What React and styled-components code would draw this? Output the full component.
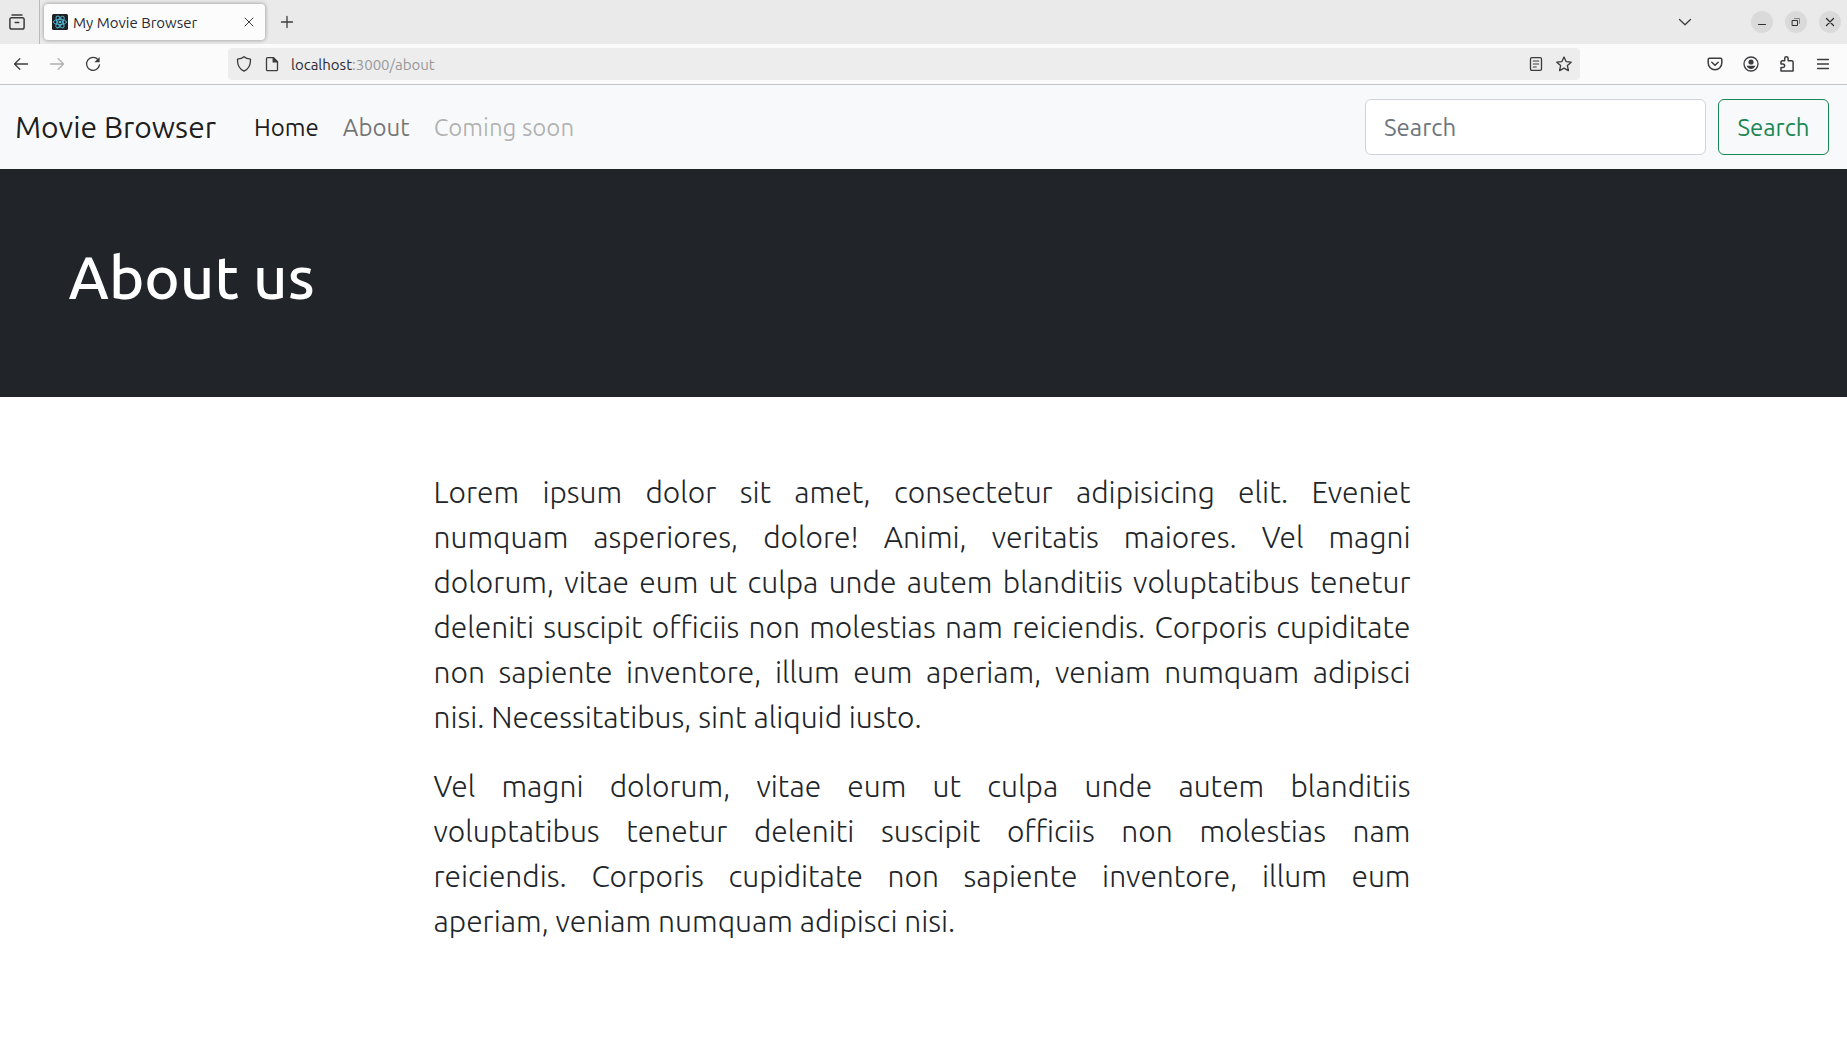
import React from "react";
import styled, { createGlobalStyle } from "styled-components";

const GlobalStyle = createGlobalStyle`
  *, *::before, *::after { box-sizing: border-box; }
  body {
    margin: 0;
    background: #fff;
    color: #212529;
    font-family: Ubuntu, "Noto Sans", "Open Sans", sans-serif;
    font-size: 24px;
    font-weight: 400;
    line-height: 36px;
  }
  button, input { font: inherit; margin: 0; }
`;

/* Browser window */
const Chrome = styled.header`
  color: #2b2a33;
  font-size: 15px;
  line-height: 20px;
  border-bottom: 1px solid #c4c4c4;
`;

const TabStrip = styled.div`
  display: flex;
  align-items: center;
  height: 44px;
  padding-right: 6px;
  background: #eaeaea;
`;

const IconButton = styled.button`
  display: flex;
  align-items: center;
  justify-content: center;
  flex: none;
  width: ${(p) => p.$width || 36}px;
  height: 32px;
  padding: 0;
  border: 0;
  background: transparent;
  color: ${(p) => (p.$faded ? "#b0b0b0" : "#3c3c3f")};
`;

const ViewSlot = styled.div`
  display: flex;
  align-items: center;
  justify-content: center;
  align-self: stretch;
  width: 40px;
  padding-right: 5px;
  border-right: 1px solid #bababa;
`;

const Tab = styled.div`
  display: flex;
  align-items: center;
  width: 221px;
  height: 36px;
  margin: 0 4px;
  padding: 0 4px 0 8px;
  border-radius: 4px;
  background: #fcfcfc;
  box-shadow: 0 0 4px rgba(0, 0, 0, 0.4);
`;

const ChromeText = styled.span`
  flex: 1;
  padding: 2px 0 0 5px;
  color: ${(p) => (p.$faded ? "#98989b" : "#2b2a33")};
  white-space: nowrap;
`;

const WindowControls = styled.div`
  display: flex;
  gap: 12px;
  margin-left: 48px;
`;

const RoundButton = styled.button`
  display: flex;
  align-items: center;
  justify-content: center;
  width: 22px;
  height: 22px;
  padding: 0;
  border: 0;
  border-radius: 50%;
  background: #dadada;
  color: #2e2e2e;
`;

const Spacer = styled.div`
  flex: 1;
`;

const Toolbar = styled.div`
  display: flex;
  align-items: center;
  height: 40px;
  padding: 0 6px 0 3px;
  background: #fbfbfb;
`;

const AddressBar = styled.div`
  display: flex;
  align-items: center;
  flex: 1;
  height: 32px;
  margin: 0 117px;
  padding: 0 2px;
  border-radius: 4px;
  background: #ededed;
`;

const Host = styled.span`
  color: #2b2a33;
`;

/* Site */
const Navbar = styled.nav`
  display: flex;
  align-items: center;
  height: 84px;
  padding: 0 18px 0 15px;
  background: #f8f9fa;
`;

const Brand = styled.a`
  margin-right: 26px;
  color: rgba(0, 0, 0, 0.9);
  font-size: 30px;
  line-height: 45px;
  text-decoration: none;
`;

const NavList = styled.ul`
  display: flex;
  flex: 1;
  margin: 0;
  padding: 0;
  list-style: none;
`;

const linkColors = {
  active: "rgba(0, 0, 0, 0.9)",
  normal: "rgba(0, 0, 0, 0.55)",
  disabled: "rgba(0, 0, 0, 0.3)",
};

const NavLink = styled.a`
  display: block;
  padding: 13px 12px 11px;
  color: ${(p) => linkColors[p.$state]};
  text-decoration: none;
`;

const SearchForm = styled.form`
  display: flex;
  gap: 12px;
`;

const SearchInput = styled.input`
  width: 341px;
  height: 56px;
  padding: 9px 18px;
  border: 1px solid #ced4da;
  border-radius: 6px;
  background: #fff;
  color: #212529;
  &::placeholder { color: #6c757d; opacity: 1; }
`;

const SearchButton = styled.button`
  min-width: 111px;
  height: 56px;
  padding: 10px 18px 8px;
  border: 1px solid #198754;
  border-radius: 6px;
  background: transparent;
  color: #198754;
`;

const Container = styled.div`
  max-width: 1710px;
  margin: 0 auto;
`;

const Banner = styled.section`
  padding: 72px 0 84px;
  background: #212529;
  color: #fff;
`;

const Title = styled.h1`
  margin: 0;
  font-size: 60px;
  font-weight: 500;
  line-height: 72px;
`;

const Article = styled.main`
  max-width: 980px;
  margin: 0 auto;
  padding: 73px 3px 72px 0;
`;

const Lead = styled.p`
  margin: 0 0 24px;
  font-size: 30px;
  font-weight: 300;
  line-height: 45px;
  text-align: justify;
`;

const Line = styled.span`
  display: block;
  &:not(:last-child) { text-align-last: justify; }
`;

const Glyph = styled.svg.attrs({ viewBox: "0 0 16 16", "aria-hidden": true })`
  display: block;
  width: 16px;
  height: 16px;
  fill: none;
  stroke: currentColor;
  stroke-width: ${(p) => p.$stroke || 1.3};
  stroke-linecap: round;
  stroke-linejoin: round;
`;

const ReactMark = () => (
  <Glyph>
    <rect width="16" height="16" rx="1.5" fill="#1f2023" stroke="none" />
    <g stroke="#4fb9d6" strokeWidth="0.9">
      <ellipse cx="8" cy="8" rx="6.6" ry="2.6" />
      <ellipse cx="8" cy="8" rx="6.6" ry="2.6" transform="rotate(60 8 8)" />
      <ellipse cx="8" cy="8" rx="6.6" ry="2.6" transform="rotate(120 8 8)" />
    </g>
    <circle cx="8" cy="8" r="1.3" fill="#4fb9d6" stroke="none" />
  </Glyph>
);

function BrowserChrome() {
  return (
    <Chrome>
      <TabStrip>
        <ViewSlot>
          <IconButton $width={32} aria-label="Firefox View">
            <Glyph $stroke={1.5}>
              <path d="M3 1h10M2.400 3.800h11.200a1.500 1.500 0 0 1 1.500 1.500v8a1.800 1.800 0 0 1-1.800 1.800H2.700a1.800 1.800 0 0 1-1.800-1.800v-8a1.500 1.500 0 0 1 1.500-1.500zM6.200 8.500h3.600" />
            </Glyph>
          </IconButton>
        </ViewSlot>
        <Tab>
          <ReactMark />
          <ChromeText>My Movie Browser</ChromeText>
          <IconButton $width={24} aria-label="Close tab">
            <Glyph $stroke={1}><path d="M4 4l8 8M12 4l-8 8" /></Glyph>
          </IconButton>
        </Tab>
        <IconButton aria-label="New tab">
          <Glyph><path d="M8 2.500v11M2.500 8h11" /></Glyph>
        </IconButton>
        <Spacer />
        <IconButton aria-label="List all tabs">
          <Glyph><path d="M2.500 5.500L8 10.800l5.500-5.300" /></Glyph>
        </IconButton>
        <WindowControls>
          <RoundButton aria-label="Minimize">
            <Glyph $stroke={1}><path d="M4.500 10.500h7" /></Glyph>
          </RoundButton>
          <RoundButton aria-label="Restore">
            <Glyph $stroke={1}>
              <path d="M4.500 6.500h5v5h-5z" strokeLinejoin="miter" />
              <path d="M6.500 4.500h5v5" stroke="#858585" strokeLinejoin="miter" />
            </Glyph>
          </RoundButton>
          <RoundButton aria-label="Close">
            <Glyph><path d="M4.500 4.500l7 7M11.500 4.500l-7 7" /></Glyph>
          </RoundButton>
        </WindowControls>
      </TabStrip>
      <Toolbar>
        <IconButton aria-label="Back">
          <Glyph><path d="M14.500 8H1.500M6.800 2.700L1.500 8l5.300 5.300" /></Glyph>
        </IconButton>
        <IconButton aria-label="Forward" $faded disabled>
          <Glyph><path d="M1.500 8h13M9.200 2.700L14.500 8l-5.300 5.300" /></Glyph>
        </IconButton>
        <IconButton aria-label="Reload">
          <Glyph>
            <path d="M13 3.600A6.500 6.500 0 1 0 14.500 8.800" />
            <path d="M14.600 1v5.200H9.400z" fill="currentColor" stroke="none" />
          </Glyph>
        </IconButton>
        <AddressBar>
          <IconButton $width={28} aria-label="Tracking protection">
            <Glyph><path d="M8 .8C9.600 2.300 12 3 14.500 3.200c.2 5.400-1.700 9.700-6.500 12C3.200 12.900 1.300 8.600 1.500 3.200 4 3 6.400 2.300 8 .8z" /></Glyph>
          </IconButton>
          <IconButton $width={28} aria-label="Site information">
            <Glyph>
              <path d="M3.700 1.600h5.800l4 4v7.800a1.200 1.200 0 0 1-1.200 1.200H3.700a1.200 1.200 0 0 1-1.200-1.200V2.800a1.200 1.200 0 0 1 1.200-1.200z" />
              <path d="M9.200 1.600v4.300h4.300z" fill="currentColor" />
            </Glyph>
          </IconButton>
          <ChromeText $faded><Host>localhost</Host>:3000/about</ChromeText>
          <IconButton $width={28} aria-label="Reader view">
            <Glyph>
              <rect x="2.500" y="1.600" width="11" height="12.800" rx="1.400" />
              <path d="M5.300 5h5.400M5.300 8h5.400M5.300 11h3" strokeWidth="1.100" />
            </Glyph>
          </IconButton>
          <IconButton $width={28} aria-label="Bookmark this page">
            <Glyph><path d="M8 1l2.100 4.600 5.100.6-3.800 3.400 1 5L8 12.100l-4.400 2.500 1-5L.8 6.200l5.100-.6z" /></Glyph>
          </IconButton>
        </AddressBar>
        <IconButton aria-label="Save to Pocket">
          <Glyph $stroke={1.5}>
            <path d="M2.400 2.200h11.200a1.200 1.200 0 0 1 1.200 1.200V7a6.800 6.800 0 0 1-13.600 0V3.400a1.200 1.200 0 0 1 1.200-1.200zM4.800 6.300L8 9.300l3.200-3" />
          </Glyph>
        </IconButton>
        <IconButton aria-label="Account">
          <Glyph>
            <circle cx="8" cy="8" r="7" />
            <circle cx="8" cy="6" r="2.600" fill="currentColor" stroke="none" />
            <path d="M3.600 9.800h8.800c-.6 2-2.300 3.100-4.400 3.100s-3.800-1.100-4.400-3.100z" fill="currentColor" stroke="none" />
          </Glyph>
        </IconButton>
        <IconButton aria-label="Extensions">
          <Glyph $stroke={1.5}>
            <path d="M5.700 4.700V2.500a1.700 1.700 0 0 1 3.400 0v2.200h3.600a1.400 1.400 0 0 1 1.400 1.400v9H2v-3.600h2a1.700 1.700 0 0 0 0-3.400H2V6.100a1.400 1.400 0 0 1 1.400-1.400z" />
          </Glyph>
        </IconButton>
        <IconButton aria-label="Menu">
          <Glyph><path d="M2.500 3.500h11M2.500 8h11M2.500 12.500h11" /></Glyph>
        </IconButton>
      </Toolbar>
    </Chrome>
  );
}

const links = [
  { label: "Home", state: "active" },
  { label: "About", state: "normal" },
  { label: "Coming soon", state: "disabled" },
];

const paragraphs = [
  [
    "Lorem ipsum dolor sit amet, consectetur adipisicing elit. Eveniet",
    "numquam asperiores, dolore! Animi, veritatis maiores. Vel magni",
    "dolorum, vitae eum ut culpa unde autem blanditiis voluptatibus tenetur",
    "deleniti suscipit officiis non molestias nam reiciendis. Corporis cupiditate",
    "non sapiente inventore, illum eum aperiam, veniam numquam adipisci",
    "nisi. Necessitatibus, sint aliquid iusto.",
  ],
  [
    "Vel magni dolorum, vitae eum ut culpa unde autem blanditiis",
    "voluptatibus tenetur deleniti suscipit officiis non molestias nam",
    "reiciendis. Corporis cupiditate non sapiente inventore, illum eum",
    "aperiam, veniam numquam adipisci nisi.",
  ],
];

export default function App() {
  return (
    <>
      <GlobalStyle />
      <BrowserChrome />
      <Navbar>
        <Brand href="#">Movie Browser</Brand>
        <NavList>
          {links.map((l) => (
            <li key={l.label}>
              <NavLink href="#" $state={l.state} aria-disabled={l.state === "disabled"}>
                {l.label}
              </NavLink>
            </li>
          ))}
        </NavList>
        <SearchForm role="search">
          <SearchInput type="search" placeholder="Search" aria-label="Search" />
          <SearchButton type="submit">Search</SearchButton>
        </SearchForm>
      </Navbar>
      <Banner>
        <Container>
          <Title>About us</Title>
        </Container>
      </Banner>
      <Article>
        {paragraphs.map((lines) => (
          <Lead key={lines[0]}>
            {lines.map((line) => (
              <Line key={line}>{line} </Line>
            ))}
          </Lead>
        ))}
      </Article>
    </>
  );
}
